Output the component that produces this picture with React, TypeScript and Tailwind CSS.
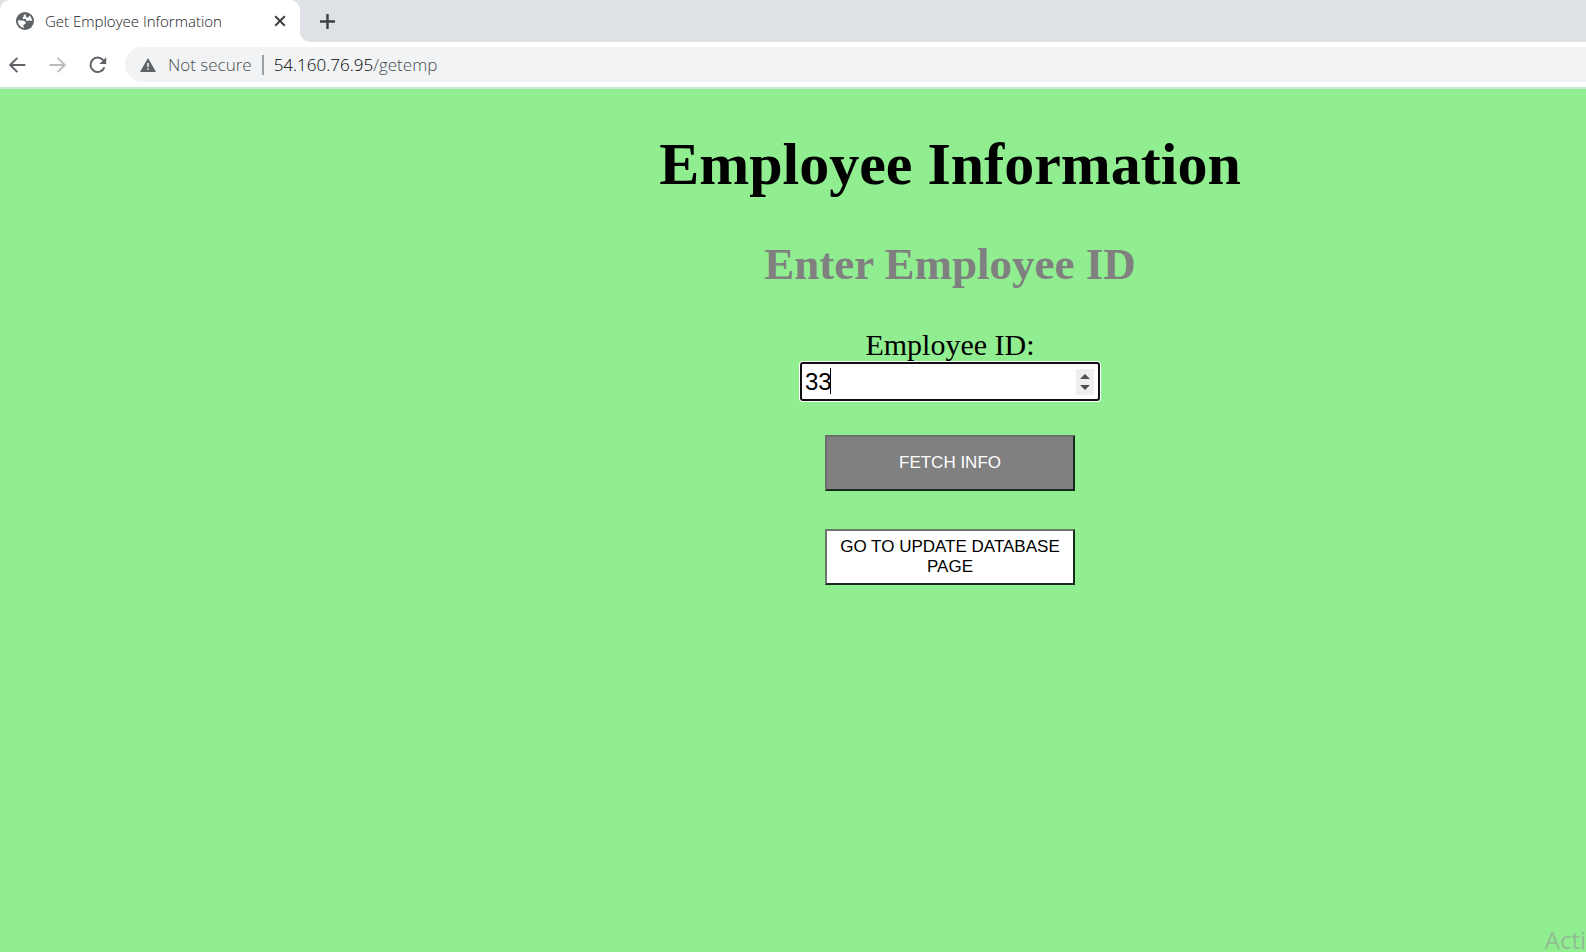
import { useState } from "react";

function GlobeIcon() {
  return (
    <svg viewBox="0 0 18 18" className="size-[18px] shrink-0" aria-hidden="true">
      <circle cx="9" cy="9" r="9" fill="#5f6368" />
      <path
        d="M2 8.2 C3.2 8 5 8.3 6.6 8.6 C7.8 9 8.9 9.3 9.7 10.2 C10.1 11 9.4 11.9 8.4 12.3 C7.4 12.6 7.2 13.2 7.2 14 C7.8 14.6 8 15.2 7.6 15.9 C4.2 15.2 1.8 12 2 8.2 Z"
        fill="#fff"
      />
      <path
        d="M9.6 2 C8.2 2.6 7.4 3.4 7.6 4.3 C7.8 5.1 6.9 5.3 6.6 6 C6.5 6.8 7.4 7.2 8.3 6.9 C9.2 6.7 9.7 7.2 10 8 C10.4 8.9 11.6 9.1 12.4 8.7 C13.4 8.3 14.4 9 16 8.8 C16 6.8 15 4.6 13.3 3.4 L12.4 5.3 L10.2 5.6 Z"
        fill="#fff"
      />
    </svg>
  );
}

function TabStrip() {
  return (
    <div className="flex h-[42px] bg-[#dee1e6]">
      <div className="flex w-[300px] shrink-0 items-center rounded-t-[10px] bg-white pr-[14px] pl-4">
        <GlobeIcon />
        <span className="ml-[11px] flex-1 text-[15px] leading-5 font-light whitespace-nowrap text-[#202124]">
          Get Employee Information
        </span>
        <button type="button" aria-label="Close tab">
          <svg viewBox="0 0 12 12" className="size-3" fill="none" stroke="#3c4043" strokeWidth="2">
            <path d="M1.2 1.2 L10.8 10.8 M10.8 1.2 L1.2 10.8" />
          </svg>
        </button>
      </div>
      <div className="flex flex-1 bg-white">
        <div className="flex flex-1 items-center rounded-bl-[10px] bg-[#dee1e6] pl-5">
          <button type="button" aria-label="New tab">
            <svg viewBox="0 0 15 15" className="size-[15px]" fill="none" stroke="#3c4043" strokeWidth="2.4">
              <path d="M7.5 0 V15 M0 7.5 H15" />
            </svg>
          </button>
        </div>
      </div>
    </div>
  );
}

function Toolbar() {
  return (
    <div className="flex h-[47px] items-start border-b-2 border-[#cbe6cf] bg-white pt-[5px]">
      <nav className="flex h-[35px] w-[125px] shrink-0 items-center gap-[22px] pl-[9px]">
        <button type="button" aria-label="Back">
          <svg viewBox="0 0 18 18" className="size-[18px]" fill="none" stroke="#5f6368" strokeWidth="1.9">
            <path d="M16.4 9 H1.4 M8.4 1.8 L1.2 9 L8.4 16.2" />
          </svg>
        </button>
        <button type="button" aria-label="Forward" disabled>
          <svg viewBox="0 0 18 18" className="size-[18px]" fill="none" stroke="#babcbe" strokeWidth="1.9">
            <path d="M0.6 9 H15.5 M8.6 1.8 L15.8 9 L8.6 16.2" />
          </svg>
        </button>
        <button type="button" aria-label="Reload">
          <svg viewBox="0 0 18 18" className="size-[18px]" fill="none" stroke="#5f6368" strokeWidth="2">
            <path d="M14.4 4.4 A7.2 7.2 0 1 0 15.4 11.4" />
            <path d="M17.2 1.2 V8 H10.4 Z" fill="#5f6368" stroke="none" />
          </svg>
        </button>
      </nav>
      <div className="flex h-[35px] flex-1 items-center rounded-l-full bg-[#f1f3f4] pl-[15px] text-[17px] leading-6 font-light whitespace-nowrap">
        <svg viewBox="0 0 16 14" className="h-[14px] w-4" aria-hidden="true">
          <path d="M8 0 L16 14 H0 Z" fill="#5f6368" />
          <path d="M7.2 5 H8.8 V9 H7.2 Z M7.2 10.2 H8.8 V11.8 H7.2 Z" fill="#f1f3f4" />
        </svg>
        <span className="ml-3 text-[#4a4d51]">Not secure</span>
        <span className="mx-[10px] h-5 w-[2px] bg-[#9aa0a6]" />
        <a href="#getemp" className="text-[#4a4d51]">
          <span className="text-black">54.160.76.95</span>/getemp
        </a>
      </div>
    </div>
  );
}

function EmployeeForm() {
  const [id, setId] = useState(33);
  return (
    <form className="flex flex-col items-center" onSubmit={(e) => e.preventDefault()}>
      <label htmlFor="emp-id" className="text-[30px] leading-[34px] text-black">
        Employee ID:
      </label>
      <div className="relative flex h-[39px] w-[300px] items-center rounded-[3px] border-2 border-[#101010] bg-white pr-1 ring-1 ring-white">
        <input
          id="emp-id"
          type="number"
          value={id}
          onChange={(e) => setId(Number(e.target.value))}
          className="h-full min-w-0 flex-1 appearance-none bg-transparent pl-[3px] font-['Liberation_Sans',sans-serif] text-[24px] text-black caret-transparent outline-none [&::-webkit-inner-spin-button]:appearance-none"
        />
        <span className="absolute top-1 left-[28px] h-[26px] w-px bg-black" />
        <div className="flex h-[26px] w-[18px] flex-col items-center justify-center gap-[6px] bg-[#efefef]">
          <button type="button" aria-label="Increase" onClick={() => setId(id + 1)}>
            <svg viewBox="0 0 10 5" className="h-[5px] w-[10px]">
              <path d="M5 0 L10 5 H0 Z" fill="#505050" />
            </svg>
          </button>
          <button type="button" aria-label="Decrease" onClick={() => setId(id - 1)}>
            <svg viewBox="0 0 10 5" className="h-[5px] w-[10px]">
              <path d="M0 0 H10 L5 5 Z" fill="#505050" />
            </svg>
          </button>
        </div>
      </div>
      <div className="mt-[34px] flex flex-col gap-[38px] font-['Liberation_Sans',sans-serif] text-[17px] leading-5">
        <button
          type="submit"
          className="h-14 w-[250px] border-2 border-t-[#6c706c] border-r-[#1b2b1b] border-b-[#1b2b1b] border-l-[#6c706c] bg-[#808080] text-white"
        >
          FETCH INFO
        </button>
        <button
          type="button"
          className="h-14 w-[250px] border-2 border-t-[#6c766c] border-r-[#1b2b1b] border-b-[#1b2b1b] border-l-[#6c766c] bg-white px-2 text-black"
        >
          GO TO UPDATE DATABASE PAGE
        </button>
      </div>
    </form>
  );
}

export default function App() {
  return (
    <div className="flex min-h-screen flex-col font-['Open_Sans',sans-serif]">
      <header>
        <TabStrip />
        <Toolbar />
      </header>
      <main className="relative flex-1 overflow-hidden bg-[#90ee90] pt-10 pl-[314px] text-center font-['Liberation_Serif',serif]">
        <h1 className="text-[60px] leading-[70px] font-bold text-black">Employee Information</h1>
        <h2 className="mt-[39px] mb-[38px] text-[45px] leading-[52px] font-bold text-[#808080]">Enter Employee ID</h2>
        <EmployeeForm />
        <p className="absolute right-0 bottom-0 font-['Open_Sans',sans-serif] text-[24px] leading-6 text-[#8fbd90]">
          Acti
        </p>
      </main>
    </div>
  );
}
